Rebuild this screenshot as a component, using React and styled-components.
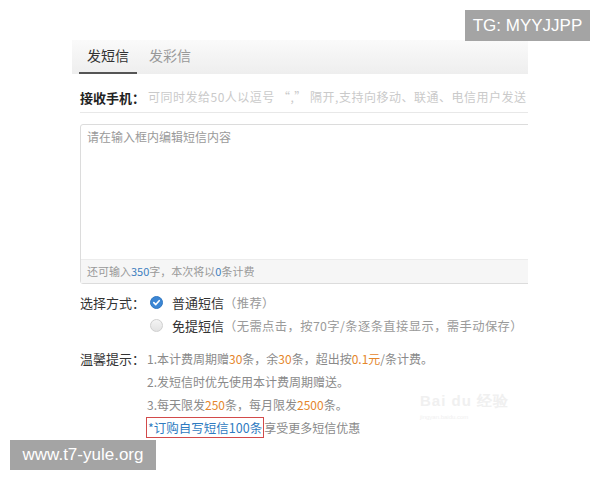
import React from "react";
import styled, { createGlobalStyle } from "styled-components";

const GlobalStyle = createGlobalStyle`
  html, body {
    margin: 0;
    padding: 0;
    background: #fff;
  }
  body {
    font-family: "Noto Sans CJK SC", "Noto Sans", sans-serif;
    color: #333;
  }
`;

const Page = styled.div`
  position: relative;
  width: 600px;
  height: 480px;
  overflow: hidden;
  padding-top: 40px;
  box-sizing: border-box;
`;

const Panel = styled.div`
  margin-left: 72px;
  width: 456px;
  overflow: hidden;
`;

const TabBar = styled.div`
  display: flex;
  height: 34px;
  background: linear-gradient(#fafafa, #eeeeee);
  padding-left: 7px;
`;

const Tab = styled.div`
  padding: 0 7px;
  font-size: 14px;
  line-height: 31px;
  color: ${(p) => (p.active ? "#333" : "#999")};
  border-bottom: 2px solid ${(p) => (p.active ? "#555" : "transparent")};
  margin-right: ${(p) => (p.active ? "4px" : "0")};
  min-width: 44px;
  text-align: center;
`;

const Content = styled.div`
  padding-left: 8px;
`;

const PhoneRow = styled.div`
  display: flex;
  align-items: center;
  padding: 13px 0 5px;
  line-height: 20px;
  border-bottom: 1px solid #e8e8e8;
  white-space: nowrap;
`;

const Label = styled.span`
  font-size: 13px;
  color: ${(p) => (p.bold ? "#222" : "#333")};
  font-weight: ${(p) => (p.bold ? 700 : 400)};
  flex-shrink: 0;
  width: ${(p) => p.width || "auto"};
  line-height: ${(p) => p.lh || "normal"};
`;

const Hint = styled.span`
  font-size: 12px;
  color: #cacaca;
  margin-left: 3px;
  letter-spacing: 0.5px;
`;

const Editor = styled.div`
  margin-top: 11px;
  width: 470px;
  height: 160px;
  border: 1px solid #dcdcdc;
  border-radius: 3px;
  box-sizing: border-box;
  display: flex;
  flex-direction: column;
`;

const Placeholder = styled.div`
  flex: 1;
  padding: 4px 6px;
  font-size: 12px;
  line-height: 16px;
  color: #9a9a9a;
`;

const Counter = styled.div`
  height: 23px;
  background: #f6f6f6;
  border-top: 1px solid #ececec;
  padding-left: 6px;
  font-size: 11px;
  line-height: 22px;
  color: #999;
`;

const Num = styled.span`
  color: ${(p) => (p.orange ? "#e5862b" : "#3f7fbf")};
`;

const Section = styled.div`
  display: flex;
  margin-top: ${(p) => p.gap};
`;

const Options = styled.div`
  display: flex;
  flex-direction: column;
`;

const Option = styled.div`
  display: flex;
  align-items: center;
  height: 23px;
  font-size: 13px;
  white-space: nowrap;
`;

const Radio = styled.span`
  width: 13px;
  height: 13px;
  border-radius: 50%;
  box-sizing: border-box;
  margin-right: 9px;
  display: flex;
  align-items: center;
  justify-content: center;
  background: ${(p) => (p.checked ? "#3b86d4" : "linear-gradient(#f4f4f4, #e2e2e2)")};
  border: 1px solid ${(p) => (p.checked ? "#3178c2" : "#cfcfcf")};
`;

const OptName = styled.span`
  color: #333;
`;

const OptNote = styled.span`
  color: #9a9a9a;
  font-size: 12.3px;
  letter-spacing: 0.4px;
`;

const Tips = styled.div`
  display: flex;
  flex-direction: column;
  font-size: 12px;
  color: #8a8a8a;
`;

const TipLine = styled.div`
  height: 23px;
  line-height: 23px;
  white-space: nowrap;
  display: flex;
  align-items: center;
`;

const LinkBox = styled.span`
  border: 1px solid #d24a4a;
  padding: 0 1px;
  line-height: 19px;
  font-size: 12.5px;
  color: #2f7bc1;
  margin-left: -1px;
`;

const Badge = styled.div`
  position: absolute;
  left: ${(p) => p.left}px;
  top: ${(p) => p.top}px;
  width: ${(p) => p.w}px;
  height: ${(p) => p.h}px;
  background: #a4a4a4;
  color: #fff;
  font-family: "Liberation Sans", Arial, sans-serif;
  font-size: 17px;
  display: flex;
  align-items: center;
  justify-content: center;
`;

const BaiduMark = styled.div`
  position: absolute;
  left: 420px;
  top: 393px;
  color: #f0f0f0;
  font-family: "Liberation Sans", sans-serif;
  font-size: 15px;
  font-weight: 700;
  letter-spacing: 1px;
  line-height: 16px;
  small {
    display: block;
    font-size: 6px;
    font-weight: 400;
    letter-spacing: 0;
  }
`;

function Check() {
  return (
    <svg width="9" height="9" viewBox="0 0 10 10">
      <path d="M2 5.2 L4.2 7.3 L8 3" fill="none" stroke="#fff" strokeWidth="1.8" strokeLinecap="round" strokeLinejoin="round" />
    </svg>
  );
}

export default function App() {
  return (
    <Page>
      <GlobalStyle />
      <Panel>
        <TabBar>
          <Tab active>发短信</Tab>
          <Tab>发彩信</Tab>
        </TabBar>
        <Content>
          <PhoneRow>
            <Label bold>接收手机：</Label>
            <Hint>可同时发给50人以逗号 “,” 隔开,支持向移动、联通、电信用户发送</Hint>
          </PhoneRow>
          <Editor>
            <Placeholder>请在输入框内编辑短信内容</Placeholder>
            <Counter>
              还可输入<Num>350</Num>字，本次将以<Num>0</Num>条计费
            </Counter>
          </Editor>
          <Section gap="7px">
            <Label width="70px" lh="23px">选择方式：</Label>
            <Options>
              <Option>
                <Radio checked>
                  <Check />
                </Radio>
                <OptName>普通短信</OptName>
                <OptNote>（推荐）</OptNote>
              </Option>
              <Option>
                <Radio />
                <OptName>免提短信</OptName>
                <OptNote>（无需点击，按70字/条逐条直接显示，需手动保存）</OptNote>
              </Option>
            </Options>
          </Section>
          <Section gap="10px">
            <Label width="67px" lh="23px">温馨提示：</Label>
            <Tips>
              <TipLine>
                1.本计费周期赠<Num orange>30</Num>条，余<Num orange>30</Num>条，超出按
                <Num orange>0.1元</Num>/条计费。
              </TipLine>
              <TipLine>2.发短信时优先使用本计费周期赠送。</TipLine>
              <TipLine>
                3.每天限发<Num orange>250</Num>条，每月限发<Num orange>2500</Num>条。
              </TipLine>
              <TipLine>
                <LinkBox>*订购自写短信100条</LinkBox>享受更多短信优惠
              </TipLine>
            </Tips>
          </Section>
        </Content>
      </Panel>
      <BaiduMark>
        Bai du 经验
        <small>jingyan.baidu.com</small>
      </BaiduMark>
      <Badge left={465} top={10} w={125} h={31}>TG: MYYJJPP</Badge>
      <Badge left={10} top={440} w={146} h={30}>www.t7-yule.org</Badge>
    </Page>
  );
}
